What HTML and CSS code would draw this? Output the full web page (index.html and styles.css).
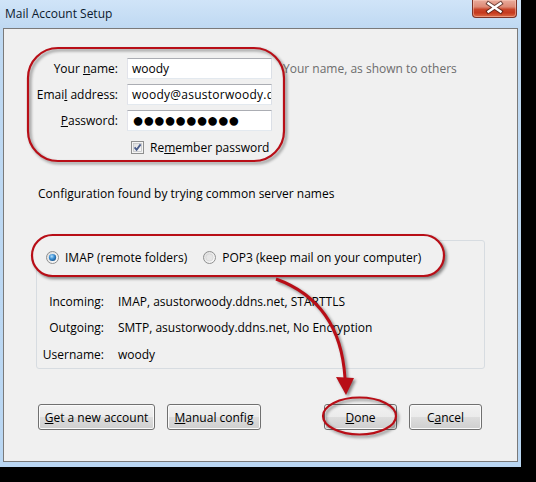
FILE: index.html
```html
<!DOCTYPE html>
<html>
<head>
<meta charset="utf-8">
<title>Mail Account Setup</title>
<link rel="stylesheet" href="styles.css">
</head>
<body>
<div class="window">
  <div class="titlebar">
    <span class="title">Mail Account Setup</span>
    <div class="close">
      <svg width="45" height="18" viewBox="0 0 45 18">
        <path d="M16.5 4.5 L28.5 12.5 M28.5 4.5 L16.5 12.5" stroke="#3b1a14" stroke-width="4.4" stroke-linecap="square" fill="none" opacity="0.7"/>
        <path d="M16.5 4.5 L28.5 12.5 M28.5 4.5 L16.5 12.5" stroke="#ffffff" stroke-width="2.4" stroke-linecap="square" fill="none"/>
      </svg>
    </div>
  </div>
  <div class="client">
    <div class="identity">
      <span class="lbl">Your <u>n</u>ame:</span>
      <div class="field">woody</div>
      <span class="hint">Your name, as shown to others</span>

      <span class="lbl">Emai<u>l</u> address:</span>
      <div class="field email">woody@asustorwoody.ddns.net</div>
      <span></span>

      <span class="lbl"><u>P</u>assword:</span>
      <div class="field pw">●●●●●●●●●●</div>
      <span></span>

      <span></span>
      <div class="remember">
        <svg class="box" width="13" height="13" viewBox="0 0 13 13">
          <defs>
            <linearGradient id="cbg" x1="0" y1="0" x2="1" y2="1">
              <stop offset="0" stop-color="#dcdcdc"/>
              <stop offset="1" stop-color="#fbfbfb"/>
            </linearGradient>
          </defs>
          <rect x="0.5" y="0.5" width="12" height="12" fill="#f4f4f4" stroke="#8e8f8f"/>
          <rect x="2.5" y="2.5" width="8" height="8" fill="url(#cbg)" stroke="#c2c4c6" stroke-width="0.8"/>
          <path d="M3.6 6.4 L5.6 8.8 L9.6 3.4" stroke="#485b8a" stroke-width="1.8" fill="none"/>
        </svg>
        <span>Re<u>m</u>ember password</span>
      </div>
      <span></span>
    </div>

    <p class="status">Configuration found by trying common server names</p>

    <div class="panel">
      <div class="protocols">
        <label class="opt">
          <svg width="13" height="13" viewBox="0 0 13 13">
            <defs>
              <linearGradient id="rbg" x1="0" y1="0" x2="1" y2="1">
                <stop offset="0" stop-color="#dadada"/>
                <stop offset="1" stop-color="#ffffff"/>
              </linearGradient>
              <radialGradient id="rdot" cx="0.4" cy="0.35" r="0.7">
                <stop offset="0" stop-color="#b6e0fb"/>
                <stop offset="0.5" stop-color="#3a8fd4"/>
                <stop offset="1" stop-color="#174f86"/>
              </radialGradient>
            </defs>
            <circle cx="6.5" cy="6.5" r="6" fill="url(#rbg)" stroke="#8e8f8f"/>
            <circle cx="6.5" cy="6.5" r="3.6" fill="url(#rdot)"/>
          </svg>
          <span>IMAP (remote folders)</span>
        </label>
        <label class="opt second">
          <svg width="13" height="13" viewBox="0 0 13 13">
            <circle cx="6.5" cy="6.5" r="6" fill="url(#rbg)" stroke="#8e8f8f"/>
            <circle cx="6.5" cy="6.5" r="3.6" fill="#e6e6e6" stroke="#d0d0d0" stroke-width="0.6"/>
          </svg>
          <span>POP3 (keep mail on your computer)</span>
        </label>
      </div>
      <div class="details">
        <span class="dlbl">Incoming:</span><span>IMAP, asustorwoody.ddns.net, STARTTLS</span>
        <span class="dlbl">Outgoing:</span><span>SMTP, asustorwoody.ddns.net, No Encryption</span>
        <span class="dlbl">Username:</span><span>woody</span>
      </div>
    </div>

    <div class="buttons">
      <div class="group">
        <button class="btn w-wide"><u>G</u>et a new account</button>
        <button class="btn w-mid"><u>M</u>anual config</button>
      </div>
      <div class="group">
        <button class="btn w-std"><u>D</u>one</button>
        <button class="btn w-std">C<u>a</u>ncel</button>
      </div>
    </div>
  </div>

  <svg class="ann-under" width="536" height="482" viewBox="0 0 536 482">
    <rect x="32" y="235" width="412" height="41" rx="20.5" fill="#f0f0f0" stroke="#b80e17" stroke-width="2.2"/>
  </svg>
  <svg class="ann-over" width="536" height="482" viewBox="0 0 536 482">
    <rect x="28" y="48" width="256" height="113" rx="30" fill="none" stroke="#b80e17" stroke-width="2.2"/>
    <ellipse cx="359.5" cy="416" rx="36.5" ry="18.5" fill="none" stroke="#b80e17" stroke-width="2.2"/>
    <path d="M276 279 C320 295 342 330 345 378" fill="none" stroke="#b80e17" stroke-width="3"/>
    <polygon points="336,377 354,378 346,395" fill="#b80e17"/>
  </svg>
</div>
</body>
</html>
```
FILE: styles.css
```css
* {
  box-sizing: border-box;
}

html,
body {
  margin: 0;
  padding: 0;
}

body {
  width: 536px;
  height: 482px;
  overflow: hidden;
  background: #000;
  font-family: "Open Sans", "Noto Sans", "DejaVu Sans", sans-serif;
  font-size: 12px;
  color: #000;
}

.window {
  position: relative;
  width: 521px;
  height: 467px;
  display: flex;
  flex-direction: column;
  padding: 0 3px 5px 3px;
  background: linear-gradient(to bottom, #d0e4f8 0px, #bfd9f2 28px, #bad7f3 100%);
}

.titlebar {
  height: 28px;
  display: flex;
  align-items: flex-start;
  flex: none;
}

.title {
  margin: 6px 0 0 2px;
  line-height: 16px;
  color: #0b1a2e;
}

.close {
  margin-left: auto;
  margin-right: 1px;
  width: 45px;
  height: 18px;
  border: 1px solid #7b3328;
  border-top: none;
  border-radius: 0 0 4px 4px;
  background: linear-gradient(to bottom, #e9ab9c 0%, #dd8a76 40%, #c9452a 55%, #c5391d 75%, #dc6a45 100%);
  box-shadow: inset 0 0 0 1px rgba(255, 210, 195, 0.45);
}

.close svg {
  display: block;
  margin: -1px 0 0 -1px;
}

.client {
  flex: 1;
  border: 1px solid #7a7a7a;
  background: #f0f0f0;
  padding-top: 29px;
}

.identity {
  display: grid;
  grid-template-columns: 123px 145px 1fr;
  grid-template-rows: 21px 21px 21px 22px;
  row-gap: 5px;
}

.lbl {
  text-align: right;
  padding-right: 9px;
  line-height: 21px;
  white-space: nowrap;
}

.field {
  height: 21px;
  background: #fff;
  border: 1px solid;
  border-color: #abadb3 #dbdfe6 #e3e9ef #e2e3ea;
  padding: 0 4px;
  line-height: 19px;
  white-space: nowrap;
  overflow: hidden;
}

.field.email {
  letter-spacing: 0.25px;
}

.field.pw {
  font-family: "Liberation Sans", "DejaVu Sans", sans-serif;
  font-size: 20px;
  letter-spacing: -1.43px;
  line-height: 19px;
  padding-left: 4px;
}

.hint {
  padding-left: 11px;
  line-height: 21px;
  color: #6d6d6d;
  white-space: nowrap;
}

.remember {
  display: flex;
  align-items: center;
  gap: 6px;
  margin-left: 4px;
  white-space: nowrap;
}

.remember .box {
  flex: none;
}

.status {
  margin: 28px 0 0 34px;
  line-height: 16px;
}

.panel {
  margin: 38px 0 0 32px;
  width: 449px;
  height: 129px;
  border: 1px solid #d7dce1;
  border-radius: 3px;
  padding: 6px 0 0 9px;
}

.protocols {
  position: relative;
  z-index: 2;
  display: flex;
  align-items: center;
  height: 20px;
}

.opt {
  display: flex;
  align-items: center;
  gap: 6px;
  white-space: nowrap;
}

.opt svg {
  flex: none;
}

.opt.second {
  margin-left: 16px;
}

.details {
  margin: 21px 0 0 -6px;
  display: grid;
  grid-template-columns: 64px 1fr;
  grid-auto-rows: 26.5px;
  column-gap: 14px;
  align-items: center;
  white-space: nowrap;
}

.dlbl {
  text-align: right;
}

.buttons {
  margin: 35px 0 0 34px;
  width: 444px;
  display: flex;
  justify-content: space-between;
}

.group {
  display: flex;
  gap: 12px;
}

.btn {
  height: 26px;
  padding: 0;
  font-family: inherit;
  font-size: 12px;
  color: #000;
  border: 1px solid #707070;
  border-radius: 3px;
  background: linear-gradient(to bottom, #f2f2f2 0%, #ebebeb 50%, #dddddd 51%, #cfcfcf 100%);
  box-shadow: inset 0 0 0 1px #fbfbfb;
}

.w-wide {
  width: 117px;
}

.w-mid {
  width: 94px;
}

.w-std {
  width: 73px;
}

.ann-under,
.ann-over {
  position: absolute;
  left: 0;
  top: 0;
  pointer-events: none;
  filter: drop-shadow(2px 2px 1.5px rgba(0, 0, 0, 0.45));
}

.ann-under {
  z-index: 1;
}

.ann-over {
  z-index: 3;
}
```
